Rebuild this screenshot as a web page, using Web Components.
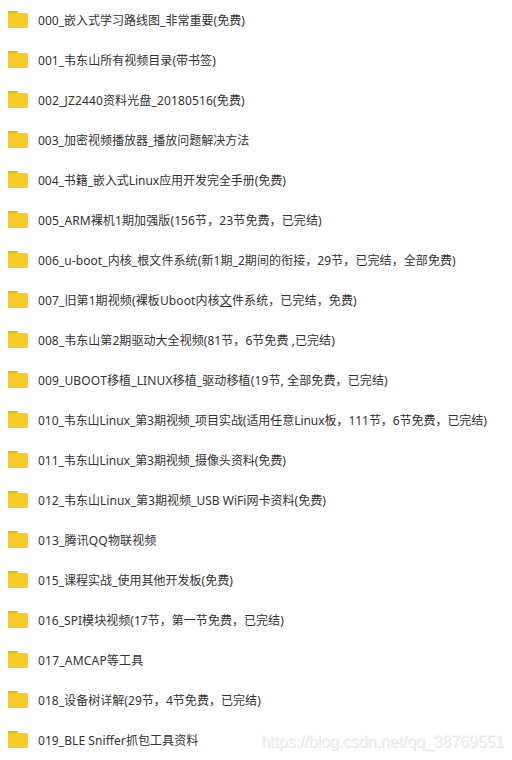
<!DOCTYPE html>
<html lang="zh-CN">
<head>
<meta charset="utf-8">
<title>文件列表</title>
<style>
html, body { margin: 0; background: #fff; }
body { width: 512px; height: 760px; overflow: hidden; position: relative; }
</style>
</head>
<body>
<file-list></file-list>
<water-mark>https://blog.csdn.net/qq_38769551</water-mark>
<script>
class FolderIcon extends HTMLElement {
  constructor() {
    super();
    this.attachShadow({ mode: 'open' }).innerHTML = `
      <style>:host { display: block; width: 20px; height: 17px; } svg { display: block; }</style>
      <svg width="20" height="17" viewBox="0 0 20 17">
        <path d="M0 6V1Q0 0 1 0H8.6Q9.4 0 9.8 .7L10.8 3V6Z" fill="#ebb30c"/>
        <path d="M0 2.3H10.3L10.6 2H19Q20 2 20 3V16Q20 17 19 17H1Q0 17 0 16Z" fill="#f8ca2c"/>
      </svg>`;
  }
}
customElements.define('folder-icon', FolderIcon);

class FileRow extends HTMLElement {
  constructor() {
    super();
    this.attachShadow({ mode: 'open' }).innerHTML = `
      <style>
        :host { display: flex; height: 40px; box-sizing: border-box; padding-left: 8px; gap: 10px; align-items: flex-start; }
        folder-icon { margin-top: 11px; flex: none; }
        .name { font: 12px/42px "Noto Sans", "Noto Sans CJK SC", sans-serif; color: #333; white-space: pre; font-kerning: none; font-variant-ligatures: none; }
      </style>
      <folder-icon></folder-icon><span class="name"><slot></slot></span>`;
  }
  connectedCallback() {
    const name = this.shadowRoot.querySelector('.name');
    const width = name.getBoundingClientRect().width;
    const count = this.textContent.length;
    name.style.letterSpacing = ((Number(this.getAttribute('width')) - .7 - width) / count) + 'px';
  }
}
customElements.define('file-row', FileRow);

class FileList extends HTMLElement {
  constructor() {
    super();
    this.attachShadow({ mode: 'open' }).innerHTML = `
      <style>
        :host { display: flex; flex-direction: column; }
        u { text-decoration: underline; text-decoration-thickness: 1px; text-underline-offset: 1px; }
      </style>
      <file-row width="207.5">000_嵌入式学习路线图_非常重要(免费)</file-row>
      <file-row width="178.5">001_韦东山所有视频目录(带书签)</file-row>
      <file-row width="207.5">002_JZ2440资料光盘_20180516(免费)</file-row>
      <file-row width="212">003_加密视频播放器_播放问题解决方法</file-row>
      <file-row width="248.5">004_书籍_嵌入式Linux应用开发完全手册(免费)</file-row>
      <file-row width="284.5">005_ARM裸机1期加强版(156节，23节免费，已完结)</file-row>
      <file-row width="418.5">006_u-boot_内核_根文件系统(新1期_2期间的衔接，29节，已完结，全部免费)</file-row>
      <file-row width="319.5">007_旧第1期视频(裸板Uboot内核<u>文</u>件系统，已完结，免费)</file-row>
      <file-row width="297.5">008_韦东山第2期驱动大全视频(81节，6节免费 ,已完结)</file-row>
      <file-row width="350.5">009_UBOOT移植_LINUX移植_驱动移植(19节, 全部免费，已完结)</file-row>
      <file-row width="449.5">010_韦东山Linux_第3期视频_项目实战(适用任意Linux板，111节，6节免费，已完结)</file-row>
      <file-row width="248.5">011_韦东山Linux_第3期视频_摄像头资料(免费)</file-row>
      <file-row width="288.5">012_韦东山Linux_第3期视频_USB WiFi网卡资料(免费)</file-row>
      <file-row width="119.2">013_腾讯QQ物联视频</file-row>
      <file-row width="195.5">015_课程实战_使用其他开发板(免费)</file-row>
      <file-row width="246.5">016_SPI模块视频(17节，第一节免费，已完结)</file-row>
      <file-row width="106.2">017_AMCAP等工具</file-row>
      <file-row width="223.5">018_设备树详解(29节，4节免费，已完结)</file-row>
      <file-row width="161">019_BLE Sniffer抓包工具资料</file-row>`;
  }
}
customElements.define('file-list', FileList);

class WaterMark extends HTMLElement {
  constructor() {
    super();
    this.attachShadow({ mode: 'open' }).innerHTML = `
      <style>
        :host { position: absolute; left: 261px; top: 732px; font: 16px/20px "Liberation Sans", Arial, sans-serif;
          color: #f4f4f4; text-shadow: 1px 1px 0 #e2e2e2; white-space: nowrap; letter-spacing: -.08px; }
      </style><slot></slot>`;
  }
}
customElements.define('water-mark', WaterMark);
</script>
</body>
</html>
